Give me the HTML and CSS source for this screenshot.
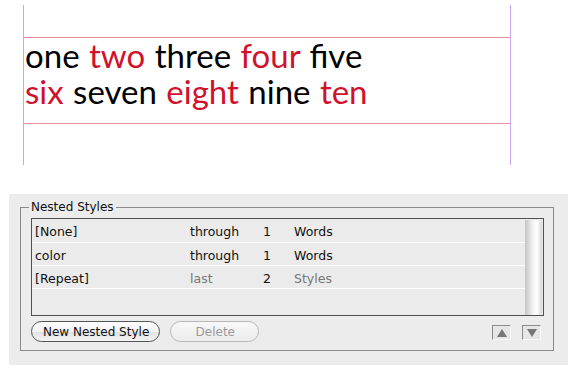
FILE: index.html
```html
<!DOCTYPE html>
<html lang="en">
<head>
    <meta charset="UTF-8">
    <title>Nested Styles</title>
    <link rel="stylesheet" href="styles.css">
</head>
<body>
    <div class="canvas">
        <div class="frame">
            <p class="sample">
                one <span class="red">two</span> three <span class="red">four</span> five<br>
                <span class="red">six</span> seven <span class="red">eight</span> nine <span class="red">ten</span>
            </p>
        </div>
    </div>

    <div class="panel">
        <fieldset class="group">
            <legend>Nested Styles</legend>
            <div class="list">
                <div class="rows">
                    <div class="row">
                        <span>[None]</span><span>through</span><span>1</span><span>Words</span>
                    </div>
                    <div class="row">
                        <span>color</span><span>through</span><span>1</span><span>Words</span>
                    </div>
                    <div class="row repeat">
                        <span>[Repeat]</span><span class="dim">last</span><span>2</span><span class="dim">Styles</span>
                    </div>
                </div>
                <div class="scrollbar"></div>
            </div>
            <div class="actions">
                <button class="pill">New Nested Style</button>
                <button class="pill disabled">Delete</button>
                <div class="spacer"></div>
                <button class="arrow up"></button>
                <button class="arrow down"></button>
            </div>
        </fieldset>
    </div>
</body>
</html>
```

FILE: styles.css
```css
body {
    margin: 0;
    background: #fff;
    font-family: 'DejaVu Sans', sans-serif;
}
.canvas {
    margin: 5px 0 0 23px;
    width: 488px;
    height: 160px;
    border-left: 1px solid #c9a6ee;
    border-right: 1px solid #c9a6ee;
    padding-top: 32px;
    box-sizing: border-box;
}
.frame {
    border-top: 1px solid #ec8f98;
    border-bottom: 1px solid #ec8f98;
    height: 85px;
}
.sample {
    margin: -1px 0 0;
    padding-left: 1px;
    font-family: 'Lato', sans-serif;
    font-size: 33px;
    line-height: 36px;
    word-spacing: 1px;
    color: #000;
}
.red {
    color: #d0122c;
}
.panel {
    margin: 29px 0 0 9px;
    width: 559px;
    height: 171px;
    background: #ececec;
    padding: 6px 0 0 11px;
    box-sizing: border-box;
}
.group {
    margin: 0;
    width: 534px;
    height: 151px;
    box-sizing: border-box;
    border: 1px solid #8a8a8a;
    padding: 4px 9px 0 10px;
}
.group legend {
    margin-left: -2px;
    padding: 0 2px;
    font-size: 12px;
    color: #111;
}
.list {
    display: flex;
    height: 98px;
    border: 1px solid #505050;
    background: #ebebeb;
    box-sizing: border-box;
}
.rows {
    flex: 1;
}
.row {
    display: grid;
    grid-template-columns: 155px 73px 31px 1fr;
    height: 23px;
    align-items: center;
    padding: 2px 0 0 3px;
    box-sizing: border-box;
    border-bottom: 1px solid #fff;
    font-size: 12.5px;
    color: #111;
}
.row:first-child {
    height: 24px;
}
.row .dim {
    color: #777;
}
.scrollbar {
    width: 17px;
    margin: 1px 1px 0 0;
    background: linear-gradient(to right, #c4c4c4, #f2f2f2 45%, #fff 70%, #d8d8d8);
}
.actions {
    display: flex;
    align-items: center;
    margin-top: 5px;
    gap: 10px;
}
.pill {
    height: 21px;
    border-radius: 11px;
    border: 1px solid #555;
    background: linear-gradient(#fff, #f2f2f2 50%, #e0e0e0 51%, #f4f4f4);
    font-family: 'DejaVu Sans', sans-serif;
    font-size: 12px;
    color: #111;
    padding: 0 10px 0 11px;
}
.pill.disabled {
    width: 89px;
    border-color: #b8b8b8;
    color: #9a9a9a;
    background: linear-gradient(#f8f8f8, #ececec);
}
.spacer {
    flex: 1;
}
.arrow {
    width: 19px;
    height: 15px;
    padding: 0;
    margin: 1px 0 0 0;
    border: 1px solid #f8f8f8;
    border-top-color: #8a8a8a;
    border-left-color: #8a8a8a;
    background: #e6e6e6;
    position: relative;
}
.arrow.down {
    margin-right: 3px;
}
.arrow::after {
    content: '';
    position: absolute;
    left: 4px;
    top: 3px;
    border-left: 5px solid transparent;
    border-right: 5px solid transparent;
}
.arrow.up {
    margin-right: 1px;
}
.arrow.up::after {
    border-bottom: 8px solid #767676;
}
.arrow.down::after {
    border-top: 8px solid #767676;
}
```
